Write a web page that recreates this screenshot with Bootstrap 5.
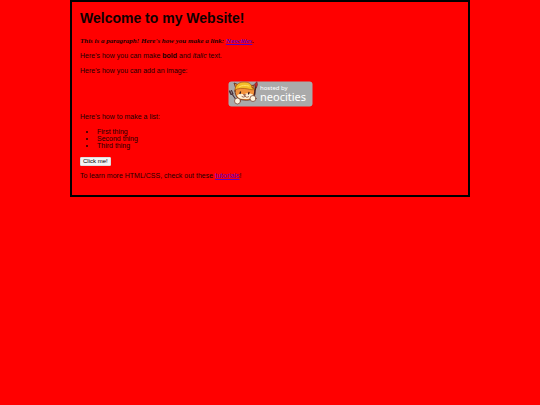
<!DOCTYPE html>
<html lang="en">
<head>
<meta charset="utf-8">
<meta name="viewport" content="width=device-width, initial-scale=1">
<title>Welcome to my Website!</title>
<link href="https://cdn.jsdelivr.net/npm/bootstrap@5.3.0/dist/css/bootstrap.min.css" rel="stylesheet">
<style>
body { background: #f00; color: #200000; font: 7px/8px "Liberation Sans", Arial, sans-serif; }
.site-box { max-width: 400px; border: 2px solid #000; padding: 7px 8px 8px; }
.site-box h1 { font-size: 14px; line-height: 18px; font-weight: 700; color: #100000; margin-bottom: 10px; }
.site-box p { margin-bottom: 7px; }
.site-box .image-lead { margin-bottom: 6px; }
.site-box a { color: #5a00c8; }
.site-box .intro { font-family: "Liberation Serif", "Times New Roman", serif; font-weight: 700; font-style: italic; }
.neo-badge { width: 85px; height: 26px; margin-bottom: 6px; }
.things { padding-left: 17px; line-height: 7px; }
.click-btn { font-size: 6px; line-height: 7px; padding: 0 2px; border: 1px solid #ddd; border-radius: 1px; background: #f4f4f4; color: #000; margin-bottom: 6px; }
</style>
</head>
<body>
<main class="site-box mx-auto">
  <h1>Welcome to my Website!</h1>
  <p class="intro">This is a paragraph! Here's how you make a link: <a href="#neocities">Neocities</a>.</p>
  <p>Here's how you can make <strong>bold</strong> and <em>italic</em> text.</p>
  <p class="image-lead">Here's how you can add an image:</p>
  <svg class="neo-badge d-block mx-auto" viewBox="0 0 85 26" role="img" aria-label="Hosted by Neocities">
    <rect x=".5" y=".5" width="84" height="25" rx="3" fill="#aaa"/>
    <g stroke-linejoin="round" stroke-linecap="round">
      <path d="M8 8 6 2l5 2M22 5l4-1 0 8" fill="#ef8b32" stroke="#5b2618" stroke-width=".8"/>
      <path d="M7 10c0 5 3 9 9 9 7 1 11-2 11-7 0-4-3-7-8-7S7 6 7 10z" fill="#f2923b" stroke="#5b2618" stroke-width=".8"/>
      <path d="M9 14.500c2-2 4-2 7-1 3-2 6-1 9 0-1 4-3 5-9 4.500-4 0-6-1-7-3.500z" fill="#fff0d5"/>
      <path d="M7 9C7 5 10 1 16 1s8 3 8 6l3 1c0 1-3 1-7 0-5-1-10-1-13 1z" fill="#f5bd28" stroke="#a85512" stroke-width=".7"/>
      <path d="M11 6c3-2 6-2 10-1" fill="none" stroke="#ffe06a"/>
      <path d="m12.500 11-.5 1.500m9-1-.5 1.500" stroke="#32151a" stroke-width="1.300"/>
      <path d="m16 13.500 1.800.2-1 1zM14 15.500c2 1 2.500 1 3-.5 1 1.500 2 1.500 3.500.7" fill="none" stroke="#762f20" stroke-width=".7"/>
      <path d="m9 20-5-7M1.500 10.500 3 13.500l2-.5-1.500-3.500M3 13 1.800 9.800" fill="none" stroke="#4b3038" stroke-width="1.200"/>
      <path d="m26 15 2-10" stroke="#4b2020" stroke-width="1.300"/>
      <path d="m27.500 6-1-3L29 .8l.5 3-1 2.700z" fill="#c3292c" stroke="#64131b" stroke-width=".5"/>
      <circle cx="9.500" cy="20" r="3" fill="#fff5df" stroke="#6b3326" stroke-width=".7"/>
      <circle cx="25" cy="17.500" r="3" fill="#fff5df" stroke="#6b3326" stroke-width=".7"/>
    </g>
    <text x="32" y="9" font-family="Noto Sans, sans-serif" font-size="6" fill="#fff">hosted by</text>
    <text x="32" y="20" font-family="Noto Sans, sans-serif" font-size="11" fill="#fff">neocities</text>
  </svg>
  <p>Here's how to make a list:</p>
  <ul class="things mb-2">
    <li>First thing</li>
    <li>Second thing</li>
    <li>Third thing</li>
  </ul>
  <button type="button" class="click-btn d-block">Click me!</button>
  <p>To learn more HTML/CSS, check out these <a href="#tutorials">tutorials</a>!</p>
</main>
<script src="https://cdn.jsdelivr.net/npm/bootstrap@5.3.0/dist/js/bootstrap.bundle.min.js"></script>
</body>
</html>
